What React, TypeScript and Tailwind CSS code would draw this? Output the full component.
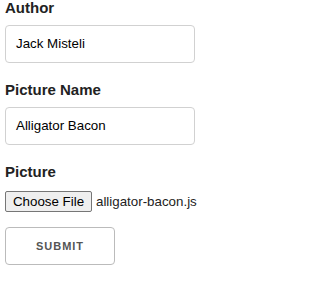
import React from "react";

export default function App() {
  return (
    <div className="w-[203px] h-[291px] overflow-hidden bg-white px-[5px] text-[#222] font-['Liberation_Sans',Arial,sans-serif]">
      <label className="block text-[15px] font-bold leading-[16px] mb-[9px]">Author</label>
      <div className="w-[190px] h-[38px] border border-[#d1d1d1] rounded-[4px] px-[10px] flex items-center text-[13.33px] text-black">
        Jack Misteli
      </div>
      <label className="block text-[15px] font-bold leading-[24px] mt-[15px] mb-[5px]">Picture Name</label>
      <div className="w-[190px] h-[38px] border border-[#d1d1d1] rounded-[4px] px-[10px] flex items-center text-[13.33px] text-black">
        Alligator Bacon
      </div>
      <label className="block text-[15px] font-bold leading-[24px] mt-[15px] mb-[5px]">Picture</label>
      <div className="flex items-center gap-[4px] pt-[2px] text-[13.33px]">
        <div className="h-[21px] w-[87px] flex items-center justify-center bg-[#efefef] border border-[#767676] rounded-[2px] text-black">
          Choose File
        </div>
        <span className="text-[#222]">alligator-bacon.js</span>
      </div>
      <div className="mt-[15px] w-[110px] h-[38px] border border-[#bbb] rounded-[4px] flex items-center justify-center text-[11px] font-bold tracking-[1px] text-[#555]">
        SUBMIT
      </div>
    </div>
  );
}
